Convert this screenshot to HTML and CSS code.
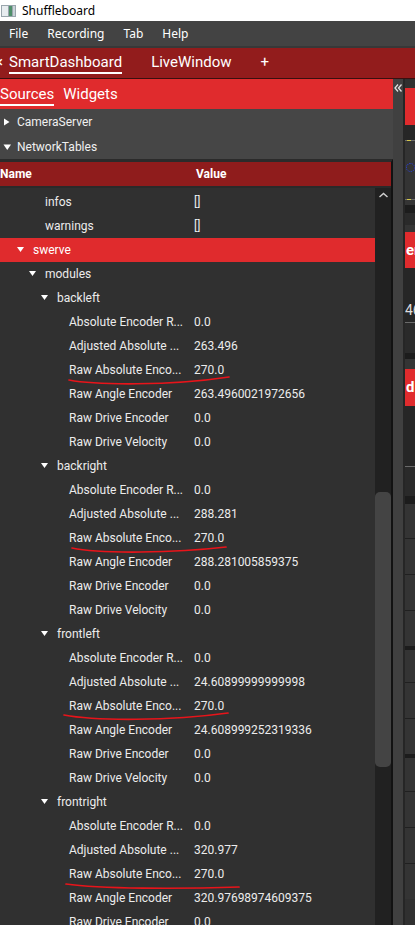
FILE: index.html
```html
<!DOCTYPE html>
<html>
<head>
<meta charset="utf-8">
<link rel="stylesheet" href="styles.css">
</head>
<body>
<div class="titlebar">
  <svg class="app-icon" width="15" height="12" viewBox="0 0 15 12"><rect x="0" y="0" width="15" height="12" fill="#9aa6ad"/><rect x="1" y="1" width="6" height="10" fill="#e8edf0"/><rect x="8" y="1" width="3" height="10" fill="#4f8f6a"/><rect x="12" y="1" width="2" height="10" fill="#c9d3d8"/></svg>
  <span>Shuffleboard</span>
</div>
<div class="menubar">
  <span>File</span><span>Recording</span><span>Tab</span><span>Help</span>
</div>
<div class="tabbar">
  <div class="tab first"><span class="close">×</span><span class="tab-label active">SmartDashboard</span></div>
  <div class="tab"><span class="tab-label">LiveWindow</span></div>
  <div class="tab"><span class="tab-label">+</span></div>
</div>
<div class="workspace">
  <div class="left">
    <div class="sourcesbar">
      <span class="src-label active">Sources</span><span class="src-label">Widgets</span>
    </div>
    <div class="srow"><svg class="tri" width="16" height="10" viewBox="0 0 16 10"><polygon points="3,1.5 8.5,5 3,8.5" fill="#fff"/></svg><span>CameraServer</span></div>
    <div class="srow"><svg class="tri" width="16" height="10" viewBox="0 0 16 10"><polygon points="2.5,2.5 10,2.5 6.25,8" fill="#fff"/></svg><span>NetworkTables</span></div>
    <div class="table">
      <div class="thead"><span class="th-name">Name</span><span class="th-value">Value</span></div>
      <div class="tbody">
        <div class="rows">
          <div class="row"><span class="name i45">infos</span><span class="value">[]</span></div>
          <div class="row"><span class="name i45">warnings</span><span class="value">[]</span></div>
          <div class="row selected"><span class="name i17"><svg class="tri" width="16" height="10" viewBox="0 0 16 10"><polygon points="0,2 7,2 3.5,7" fill="#fff"/></svg>swerve</span></div>
          <div class="row"><span class="name i29"><svg class="tri" width="16" height="10" viewBox="0 0 16 10"><polygon points="0,2 7,2 3.5,7" fill="#fff"/></svg>modules</span></div>

          <div class="row"><span class="name i41"><svg class="tri" width="16" height="10" viewBox="0 0 16 10"><polygon points="0,2 7,2 3.5,7" fill="#fff"/></svg>backleft</span></div>
          <div class="row"><span class="name i69">Absolute Encoder R...</span><span class="value">0.0</span></div>
          <div class="row"><span class="name i69">Adjusted Absolute ...</span><span class="value">263.496</span></div>
          <div class="row"><span class="name i69">Raw Absolute Enco...</span><span class="value">270.0</span><svg class="mark" width="260" height="34" viewBox="0 0 260 34"><path d="M69 22 C 95 27, 170 28, 229 19" fill="none" stroke="#e8141a" stroke-width="1.7" stroke-linecap="round"/></svg></div>
          <div class="row"><span class="name i69">Raw Angle Encoder</span><span class="value">263.4960021972656</span></div>
          <div class="row"><span class="name i69">Raw Drive Encoder</span><span class="value">0.0</span></div>
          <div class="row"><span class="name i69">Raw Drive Velocity</span><span class="value">0.0</span></div>

          <div class="row"><span class="name i41"><svg class="tri" width="16" height="10" viewBox="0 0 16 10"><polygon points="0,2 7,2 3.5,7" fill="#fff"/></svg>backright</span></div>
          <div class="row"><span class="name i69">Absolute Encoder R...</span><span class="value">0.0</span></div>
          <div class="row"><span class="name i69">Adjusted Absolute ...</span><span class="value">288.281</span></div>
          <div class="row"><span class="name i69">Raw Absolute Enco...</span><span class="value">270.0</span><svg class="mark" width="260" height="34" viewBox="0 0 260 34"><path d="M72 22 C 100 28, 175 27, 226 21" fill="none" stroke="#e8141a" stroke-width="1.7" stroke-linecap="round"/></svg></div>
          <div class="row"><span class="name i69">Raw Angle Encoder</span><span class="value">288.281005859375</span></div>
          <div class="row"><span class="name i69">Raw Drive Encoder</span><span class="value">0.0</span></div>
          <div class="row"><span class="name i69">Raw Drive Velocity</span><span class="value">0.0</span></div>

          <div class="row"><span class="name i41"><svg class="tri" width="16" height="10" viewBox="0 0 16 10"><polygon points="0,2 7,2 3.5,7" fill="#fff"/></svg>frontleft</span></div>
          <div class="row"><span class="name i69">Absolute Encoder R...</span><span class="value">0.0</span></div>
          <div class="row"><span class="name i69">Adjusted Absolute ...</span><span class="value">24.60899999999998</span></div>
          <div class="row"><span class="name i69">Raw Absolute Enco...</span><span class="value">270.0</span><svg class="mark" width="260" height="34" viewBox="0 0 260 34"><path d="M64 21 C 95 27, 170 27, 228 19" fill="none" stroke="#e8141a" stroke-width="1.7" stroke-linecap="round"/></svg></div>
          <div class="row"><span class="name i69">Raw Angle Encoder</span><span class="value">24.608999252319336</span></div>
          <div class="row"><span class="name i69">Raw Drive Encoder</span><span class="value">0.0</span></div>
          <div class="row"><span class="name i69">Raw Drive Velocity</span><span class="value">0.0</span></div>

          <div class="row"><span class="name i41"><svg class="tri" width="16" height="10" viewBox="0 0 16 10"><polygon points="0,2 7,2 3.5,7" fill="#fff"/></svg>frontright</span></div>
          <div class="row"><span class="name i69">Absolute Encoder R...</span><span class="value">0.0</span></div>
          <div class="row"><span class="name i69">Adjusted Absolute ...</span><span class="value">320.977</span></div>
          <div class="row"><span class="name i69">Raw Absolute Enco...</span><span class="value">270.0</span><svg class="mark" width="260" height="34" viewBox="0 0 260 34"><path d="M66 22 C 100 27, 180 27, 239 25" fill="none" stroke="#e8141a" stroke-width="1.7" stroke-linecap="round"/></svg></div>
          <div class="row"><span class="name i69">Raw Angle Encoder</span><span class="value">320.97698974609375</span></div>
          <div class="row"><span class="name i69">Raw Drive Encoder</span><span class="value">0.0</span></div>
        </div>
        <div class="vscroll">
          <svg class="chev" width="16" height="10" viewBox="0 0 16 10"><polyline points="4.5,7 8.5,3.5 12.5,7" fill="none" stroke="#d0d0d0" stroke-width="1.4"/></svg>
          <div class="thumb"></div>
        </div>
      </div>
    </div>
  </div>
  <div class="strip">
    <svg class="collapse" width="10" height="10" viewBox="0 0 10 10"><polyline points="5,1.5 2,5 5,8.5" fill="none" stroke="#e0e0e0" stroke-width="1.3"/><polyline points="8.5,1.5 5.5,5 8.5,8.5" fill="none" stroke="#e0e0e0" stroke-width="1.3"/></svg>
  </div>
  <div class="divider"></div>
  <div class="right">
    <div class="rb h9 c30"></div>
    <div class="rb h37 red"></div>
    <div class="rb h15 c26"></div>
    <div class="rb h1 line"><span class="tick"></span></div>
    <div class="rb h58 c33"><span class="dots"></span></div>
    <div class="rb h1 line"><span class="tick"></span></div>
    <div class="rb h5 c33"></div>
    <div class="rb h8 c1c"></div>
    <div class="rb h12 c2a"></div>
    <div class="rb h7 c33"></div>
    <div class="rb h36 red"><span class="rt">er</span></div>
    <div class="rb h30 c26"></div>
    <div class="rb h24 c26 num">46</div>
    <div class="rb h1 line"></div>
    <div class="rb h30 c2a"></div>
    <div class="rb h6 c1c"></div>
    <div class="rb h10 c33"></div>
    <div class="rb h37 red"><span class="rt">d</span></div>
    <div class="rb h60 c26"></div>
    <div class="rb h1 line"></div>
    <div class="rb h29 c2a"></div>
    <div class="rb h8 c1c"></div>
    <div class="rb h34 c33"></div>
    <div class="rb h1 line2"></div>
    <div class="rb h35 c33"></div>
    <div class="rb h1 line2"></div>
    <div class="rb h35 c33"></div>
    <div class="rb h1 line2"></div>
    <div class="rb h35 c33"></div>
    <div class="rb h4 c1c"></div>
    <div class="rb h32 c33"></div>
    <div class="rb h1 line2"></div>
    <div class="rb h35 c33"></div>
    <div class="rb h1 line2"></div>
    <div class="rb h35 c33"></div>
    <div class="rb h4 c1c"></div>
    <div class="rb h33 c33"></div>
    <div class="rb h1 line2"></div>
    <div class="rb h35 c33"></div>
    <div class="rb h1 line2"></div>
    <div class="rb h35 c33"></div>
    <div class="rb h1 line2"></div>
    <div class="rb h35 c33"></div>
  </div>
</div>
</body>
</html>
```
FILE: styles.css
```css
* { box-sizing: border-box; }
html, body { margin: 0; padding: 0; }
body {
  width: 415px;
  height: 925px;
  overflow: hidden;
  background: #303030;
  font-family: Roboto, "Liberation Sans", sans-serif;
  color: #ececec;
}
.titlebar {
  height: 21px;
  background: #fff;
  display: flex;
  align-items: center;
  gap: 6px;
  padding-left: 1px;
  font-family: "Noto Sans", "Open Sans", sans-serif;
  font-size: 12px;
  color: #000;
}
.app-icon { display: block; }
.menubar {
  height: 27px;
  background: #434343;
  border-bottom: 2px solid #383838;
  display: flex;
  align-items: center;
  gap: 19px;
  padding-left: 9px;
  font-family: "Noto Sans", "Open Sans", sans-serif;
  font-size: 12px;
  color: #fff;
}
.tabbar {
  height: 31px;
  background: #921c1c;
  border-bottom: 1px solid #3a1010;
  display: flex;
  align-items: flex-start;
  padding-top: 5px;
  font-size: 15px;
  color: #fff;
}
.tab { display: flex; align-items: flex-start; margin-right: 29px; }
.tab.first { margin-left: -5px; }
.close { line-height: 18px; width: 14px; font-size: 15px; }
.tab-label {
  line-height: 18px;
  padding-bottom: 1px;
  border-bottom: 2px solid transparent;
}
.tab-label.active { border-bottom-color: #fff; }
.workspace {
  display: flex;
  height: 846px;
}
.left {
  width: 393px;
  background: #464646;
  display: flex;
  flex-direction: column;
}
.sourcesbar {
  height: 30px;
  background: #e02b2d;
  display: flex;
  align-items: flex-start;
  padding-top: 6px;
  gap: 9px;
  font-size: 15px;
  color: #fff;
}
.src-label {
  line-height: 18px;
  padding-bottom: 1px;
  border-bottom: 2px solid transparent;
}
.src-label.active { border-bottom-color: #fff; }
.srow {
  height: 25px;
  display: flex;
  align-items: center;
  padding-left: 1px;
  font-size: 12px;
  color: #f0f0f0;
}
.srow .tri { flex: none; }
.table {
  flex: 1;
  display: flex;
  flex-direction: column;
  border-top: 3px solid #2b2b2b;
  border-right: 2px solid #121212;
  min-height: 0;
}
.thead {
  height: 26px;
  background: #8f1c1c;
  border-bottom: 2px solid #2a2a2a;
  display: flex;
  align-items: center;
  font-size: 12px;
  font-weight: bold;
  color: #fff;
}
.th-name { width: 196px; }
.tbody {
  flex: 1;
  display: flex;
  min-height: 0;
}
.rows {
  width: 375px;
  background: #303030;
  padding-top: 2px;
  overflow: hidden;
}
.row {
  position: relative;
  height: 24px;
  display: flex;
  align-items: center;
  font-size: 12px;
  color: #ececec;
  white-space: nowrap;
}
.row.selected { background: #e02b2d; color: #fff; }
.name { width: 194px; display: flex; align-items: center; }
.name .tri { flex: none; }
.i17 { padding-left: 17px; }
.i29 { padding-left: 29px; }
.i41 { padding-left: 41px; }
.i45 { padding-left: 45px; }
.i69 { padding-left: 69px; }
.value { flex: 1; }
.mark {
  position: absolute;
  left: 0;
  top: 0;
  overflow: visible;
  pointer-events: none;
}
.vscroll {
  width: 16px;
  background: #212121;
  display: flex;
  flex-direction: column;
  padding-top: 2px;
}
.chev { display: block; }
.thumb {
  margin-top: 292px;
  height: 275px;
  background: #444;
  border-radius: 5px;
}
.strip {
  width: 10px;
  background: #404040;
  padding-top: 4px;
  display: flex;
  flex-direction: column;
  align-items: center;
}
.collapse { display: block; }
.divider { width: 2px; background: #262626; }
.right {
  width: 10px;
  display: flex;
  flex-direction: column;
  overflow: hidden;
}
.rb { flex: none; position: relative; overflow: hidden; }
.h1 { height: 1px; } .h4 { height: 4px; } .h5 { height: 5px; } .h6 { height: 6px; }
.h7 { height: 7px; } .h8 { height: 8px; } .h9 { height: 9px; } .h10 { height: 10px; }
.h12 { height: 12px; } .h15 { height: 15px; } .h24 { height: 24px; } .h29 { height: 29px; }
.h30 { height: 30px; } .h32 { height: 32px; } .h33 { height: 33px; } .h34 { height: 34px; }
.h35 { height: 35px; } .h36 { height: 36px; } .h37 { height: 37px; } .h58 { height: 58px; }
.h60 { height: 60px; }
.c30 { background: #303030; }
.c26 { background: #262626; }
.c33 { background: #343434; }
.c1c { background: #1c1c1c; }
.c2a { background: #2a2a2a; }
.red { background: #e02b2d; }
.line { background: #6a6a6a; }
.line2 { background: #202020; }
.tick {
  display: block;
  position: absolute;
  left: 2px;
  top: -1px;
  width: 4px;
  height: 2px;
  background: #d6c84a;
}
.dots {
  display: block;
  position: absolute;
  left: 1px;
  top: 22px;
  width: 9px;
  height: 9px;
  border: 1px dotted #2a40e0;
  border-radius: 50%;
}
.rt {
  display: block;
  font-size: 15px;
  font-weight: bold;
  color: #fff;
  line-height: 36px;
  padding-left: 1px;
}
.num {
  font-size: 14px;
  color: #ddd;
  line-height: 24px;
}
```
